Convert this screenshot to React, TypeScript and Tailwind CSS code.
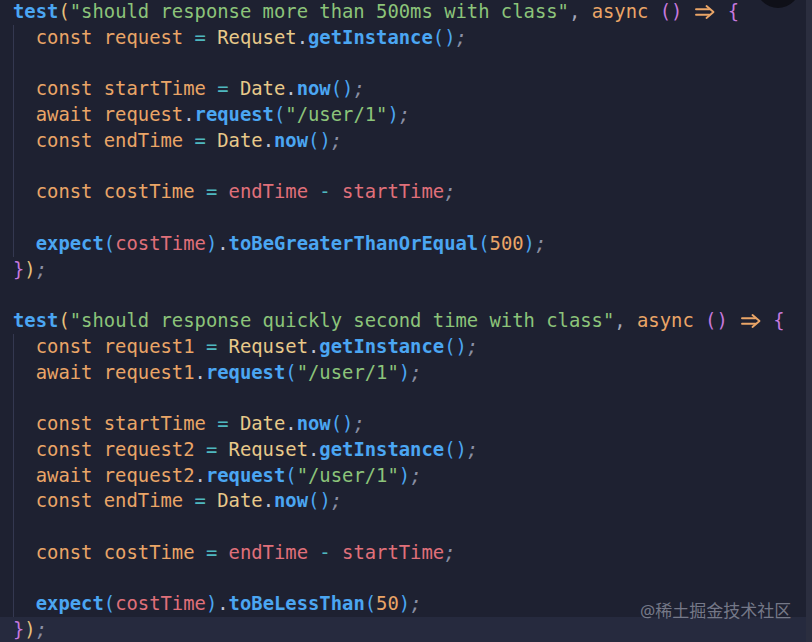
import React from "react";

type Tok = [string, string];

const C = {
  blue: "text-[#4ba6f2] font-bold",
  blueN: "text-[#4ba6f2]",
  yellow: "text-[#e5c07b]",
  green: "text-[#8cc47a]",
  orange: "text-[#eaa567]",
  teal: "text-[#4fb8c0]",
  cls: "text-[#e8c98a]",
  red: "text-[#e0707a]",
  purple: "text-[#c678dd]",
  gray: "text-[#8a8fa3] italic",
  comma: "text-[#a3a7b8]",
  num: "text-[#eaa567]",
  plain: "text-[#c0c4d6]",
};

function Arrow() {
  return (
    <span className="inline-block w-[2ch] align-middle leading-none">
      <svg width="22" height="16" viewBox="0 0 22 16" className="mx-auto block -mt-[2px]" fill="none" stroke="#eaa567" strokeWidth="1.9" strokeLinecap="round" strokeLinejoin="round">
        <path d="M2 5.2H15.5" />
        <path d="M2 10.8H15.5" />
        <path d="M12.5 2L19.5 8L12.5 14" />
      </svg>
    </span>
  );
}

function Line({ toks, highlight }: { toks: (Tok | "arrow")[]; highlight?: boolean }) {
  return (
    <div className={`h-[25.75px] leading-[25.75px] whitespace-pre ${highlight ? "bg-[#262a3e]" : ""}`}>
      <span className="pl-[13px]" />
      {toks.map((t, i) =>
        t === "arrow" ? (
          <Arrow key={i} />
        ) : (
          <span key={i} className={t[1]}>
            {t[0]}
          </span>
        )
      )}
    </div>
  );
}

const t = (s: string, c: string): Tok => [s, c];

export default function App() {
  const blank: (Tok | "arrow")[] = [];
  const head = (title: string): (Tok | "arrow")[] => [
    t("test", C.blue),
    t("(", C.yellow),
    t(`"${title}"`, C.green),
    t(", ", C.comma),
    t("async", C.orange),
    t(" ", C.plain),
    t("()", C.purple),
    t(" ", C.plain),
    "arrow",
    t(" ", C.plain),
    t("{", C.purple),
  ];
  const semi = t(";", C.gray);
  const getInst = (v: string): (Tok | "arrow")[] => [
    t("  const ", C.orange),
    t(v, C.orange),
    t(" = ", C.teal),
    t("Requset", C.cls),
    t(".", C.plain),
    t("getInstance", C.blue),
    t("()", C.blueN),
    semi,
  ];
  const awaitReq = (v: string): (Tok | "arrow")[] => [
    t("  await ", C.orange),
    t(v, C.orange),
    t(".", C.plain),
    t("request", C.blue),
    t("(", C.blueN),
    t('"/user/1"', C.green),
    t(")", C.blueN),
    semi,
  ];
  const dateNow = (v: string): (Tok | "arrow")[] => [
    t("  const ", C.orange),
    t(v, C.orange),
    t(" = ", C.teal),
    t("Date", C.cls),
    t(".", C.plain),
    t("now", C.blue),
    t("()", C.blueN),
    semi,
  ];
  const cost: (Tok | "arrow")[] = [
    t("  const ", C.orange),
    t("costTime", C.orange),
    t(" = ", C.teal),
    t("endTime", C.red),
    t(" - ", C.teal),
    t("startTime", C.red),
    semi,
  ];
  const expect = (m: string, n: string): (Tok | "arrow")[] => [
    t("  expect", C.blue),
    t("(", C.blueN),
    t("costTime", C.red),
    t(")", C.blueN),
    t(".", C.plain),
    t(m, C.blue),
    t("(", C.blueN),
    t(n, C.num),
    t(")", C.blueN),
    semi,
  ];
  const close: (Tok | "arrow")[] = [t("}", C.purple), t(")", C.yellow), semi];

  return (
    <div className="relative w-[812px] h-[642px] overflow-hidden bg-[#1e2131] flex font-['DejaVu_Sans_Mono',monospace] text-[18.85px]">
      <div className="flex-1 -mt-[1px]">
        <Line toks={head("should response more than 500ms with class")} />
        <div className="shadow-[inset_1px_0_0_#343850] ml-[13px] -mr-[13px] [&>div]:-ml-[13px]">
          <Line toks={getInst("request")} />
          <Line toks={blank} />
          <Line toks={dateNow("startTime")} />
          <Line toks={awaitReq("request")} />
          <Line toks={dateNow("endTime")} />
          <Line toks={blank} />
          <Line toks={cost} />
          <Line toks={blank} />
          <Line toks={expect("toBeGreaterThanOrEqual", "500")} />
        </div>
        <Line toks={close} />
        <Line toks={blank} />
        <Line toks={head("should response quickly second time with class")} />
        <div className="shadow-[inset_1px_0_0_#343850] ml-[13px] -mr-[13px] [&>div]:-ml-[13px]">
          <Line toks={getInst("request1")} />
          <Line toks={awaitReq("request1")} />
          <Line toks={blank} />
          <Line toks={dateNow("startTime")} />
          <Line toks={getInst("request2")} />
          <Line toks={awaitReq("request2")} />
          <Line toks={dateNow("endTime")} />
          <Line toks={blank} />
          <Line toks={cost} />
          <Line toks={blank} />
          <Line toks={expect("toBeLessThan", "50")} />
        </div>
        <Line toks={close} highlight />
      </div>
      <div className="w-[6px] bg-[#2b2e3f]" />
      <div className="absolute -top-[36px] left-[756px] w-[44px] h-[44px] rounded-full bg-[#0f1018]" />
      <div className="absolute left-[640px] top-[600px] text-[17px] leading-[22px] text-[#8b8e9e] opacity-80 font-['Noto_Sans','Noto_Sans_CJK_SC',sans-serif]">
        @稀土掘金技术社区
      </div>
    </div>
  );
}
